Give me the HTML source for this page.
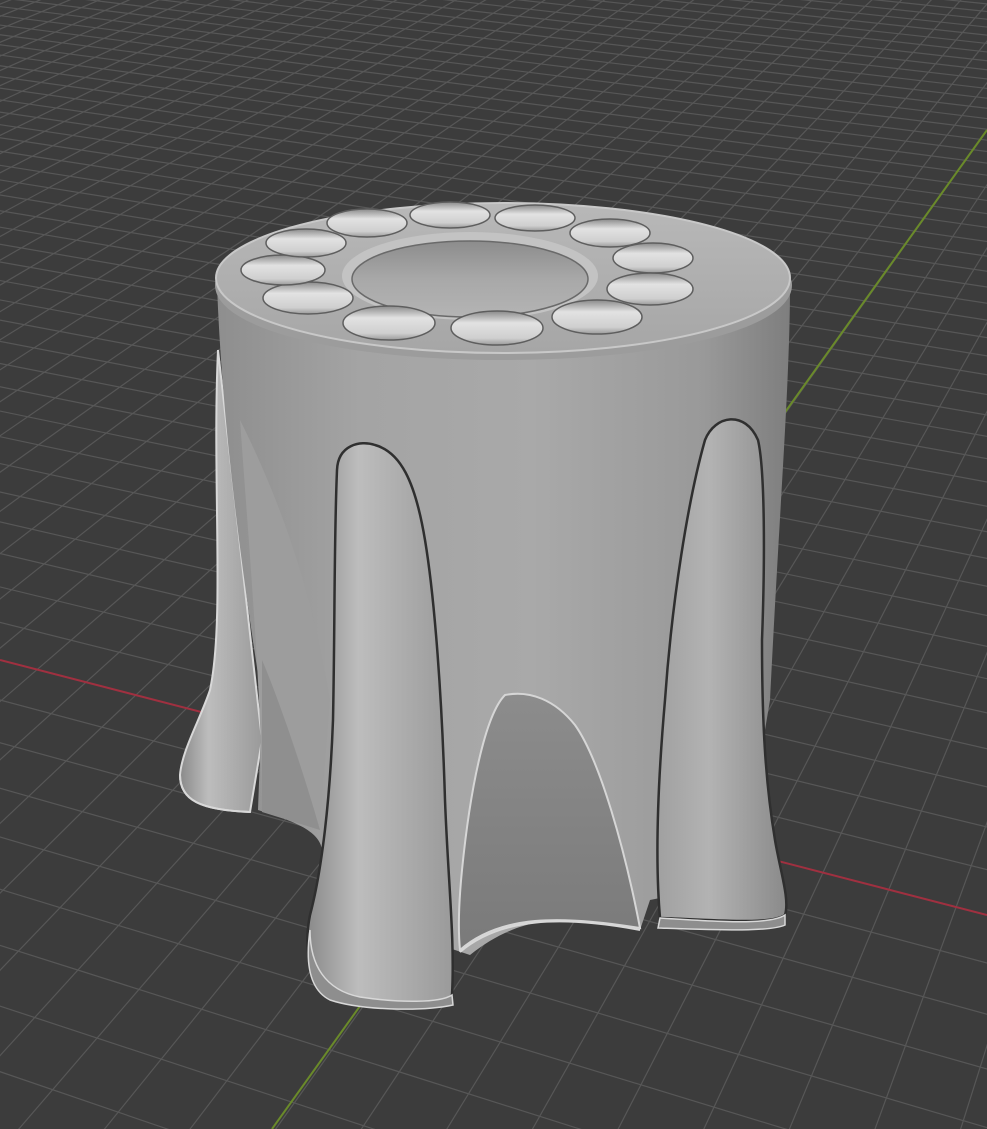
<!DOCTYPE html>
<html><head><meta charset="utf-8"><style>
html,body{margin:0;padding:0;background:#3c3c3c;width:987px;height:1129px;overflow:hidden}
svg{display:block}
</style></head><body>
<svg id="s" width="987" height="1129" viewBox="0 0 987 1129" xmlns="http://www.w3.org/2000/svg">
<defs>
<linearGradient id="body" x1="0" x2="1" y1="0" y2="0">
<stop offset="0" stop-color="#8e8e8e"/><stop offset="0.25" stop-color="#a4a4a4"/><stop offset="0.55" stop-color="#a9a9a9"/><stop offset="0.85" stop-color="#999"/><stop offset="1" stop-color="#7e7e7e"/>
</linearGradient>
<linearGradient id="leg" x1="0" x2="1" y1="0" y2="0">
<stop offset="0" stop-color="#8a8a8a"/><stop offset="0.35" stop-color="#bdbdbd"/><stop offset="1" stop-color="#9a9a9a"/>
</linearGradient>
<linearGradient id="legR" x1="0" x2="1" y1="0" y2="0">
<stop offset="0" stop-color="#a0a0a0"/><stop offset="0.4" stop-color="#b3b3b3"/><stop offset="1" stop-color="#8a8a8a"/>
</linearGradient>
<linearGradient id="arch" x1="0" x2="0" y1="0" y2="1">
<stop offset="0" stop-color="#8c8c8c"/><stop offset="1" stop-color="#7a7a7a"/>
</linearGradient>
<linearGradient id="hole" x1="0" x2="0" y1="0" y2="1">
<stop offset="0" stop-color="#8a8a8a"/><stop offset="0.35" stop-color="#e2e2e2"/><stop offset="0.8" stop-color="#cfcfcf"/><stop offset="1" stop-color="#9a9a9a"/>
</linearGradient>
<linearGradient id="top" x1="0" x2="0" y1="0" y2="1">
<stop offset="0" stop-color="#b8b8b8"/><stop offset="1" stop-color="#a6a6a6"/>
</linearGradient>
<linearGradient id="ch" x1="0" x2="0" y1="0" y2="1">
<stop offset="0" stop-color="#8c8c8c"/><stop offset="0.5" stop-color="#a8a8a8"/><stop offset="1" stop-color="#b4b4b4"/>
</linearGradient>
</defs>
<rect width="987" height="1129" fill="#3c3c3c"/>
<g id="grid" stroke="#575757" stroke-width="1.2" fill="none"></g>
<line x1="0" y1="660" x2="987" y2="915" stroke="#a03040" stroke-width="2"/>
<line x1="987" y1="130" x2="272" y2="1129" stroke="#6a8a2a" stroke-width="2"/>

<!-- back legs -->
<path d="M218 350 C212 480 225 620 210 690 C200 720 182 750 180 775 C180 800 200 810 250 812 L262 740 Z" fill="url(#leg)" stroke="#d8d8d8" stroke-width="2"/>
<path d="M740 640 C748 670 762 690 762 705 C760 720 748 725 740 728 Z" fill="#a2a2a2" stroke="#d8d8d8" stroke-width="2"/>

<!-- body -->
<path d="M217 285 C222 420 240 560 262 700 L258 810 C290 820 320 830 322 850 L330 930 L440 945 L470 955 C520 915 560 920 590 920 L640 930 L650 900 L700 890 L740 880 L770 700 C780 500 790 380 790 285 Z" fill="url(#body)"/>
<path d="M240 420 C250 560 262 700 262 810 L320 825 L330 700 C315 610 290 520 240 420 Z" fill="#9d9d9d"/>
<path d="M262 660 C275 690 300 760 320 830 L262 812 Z" fill="#8f8f8f"/>
<!-- center arch -->
<path d="M505 695 C485 715 470 790 462 870 C459 900 458 930 460 950 C500 915 560 915 640 928 C625 850 600 760 575 725 C555 700 530 690 505 695 Z" fill="url(#arch)" stroke="#d6d6d6" stroke-width="2"/>
<!-- front-left leg -->
<path d="M337 470 C338 445 360 440 375 445 C400 452 415 480 425 540 C435 600 442 700 445 800 C448 880 455 940 452 995 C440 1010 380 1005 335 995 C310 985 303 950 310 915 C322 870 330 800 333 720 C335 620 334 540 337 470 Z" fill="url(#leg)" stroke="#2f2f2f" stroke-width="2.5"/>
<path d="M310 930 C310 965 325 990 360 997 C400 1003 440 1003 452 995 L453 1005 C420 1012 360 1010 330 1000 C310 990 305 965 310 930 Z" fill="#8e8e8e" stroke="#d8d8d8" stroke-width="1.5"/>
<!-- front-right leg -->
<path d="M705 440 C715 415 745 410 758 440 C765 470 765 560 762 640 C762 720 765 780 775 840 C780 870 790 900 785 915 C770 925 720 920 660 918 C655 860 658 780 665 700 C672 600 688 500 705 440 Z" fill="url(#legR)" stroke="#2f2f2f" stroke-width="2.5"/>
<path d="M660 918 C720 922 770 925 785 915 L785 925 C770 932 720 930 658 928 Z" fill="#8e8e8e" stroke="#d8d8d8" stroke-width="1.5"/>
<path d="M180 775 C180 800 200 810 250 812" fill="none" stroke="#d8d8d8" stroke-width="2"/>
<path d="M460 952 C500 918 560 915 640 930" fill="none" stroke="#d8d8d8" stroke-width="2"/>

<!-- top rim -->
<path d="M215 285 C215 250 340 203 503 203 C666 203 792 250 792 285 C792 330 660 360 503 360 C346 360 215 330 215 285 Z" fill="#9c9c9c"/>
<ellipse cx="503" cy="278" rx="287" ry="75" fill="url(#top)" stroke="#c8c8c8" stroke-width="2"/>
<ellipse cx="470" cy="276" rx="128" ry="44" fill="#c3c3c3"/>
<ellipse cx="470" cy="279" rx="118" ry="38" fill="url(#ch)" stroke="#6a6a6a" stroke-width="1.5"/>
<g fill="url(#hole)" stroke="#5e5e5e" stroke-width="1.5">
<ellipse cx="367" cy="223" rx="40" ry="14"/>
<ellipse cx="450" cy="215" rx="40" ry="13"/>
<ellipse cx="535" cy="218" rx="40" ry="13"/>
<ellipse cx="610" cy="233" rx="40" ry="14"/>
<ellipse cx="653" cy="258" rx="40" ry="15"/>
<ellipse cx="650" cy="289" rx="43" ry="16"/>
<ellipse cx="597" cy="317" rx="45" ry="17"/>
<ellipse cx="497" cy="328" rx="46" ry="17"/>
<ellipse cx="389" cy="323" rx="46" ry="17"/>
<ellipse cx="308" cy="298" rx="45" ry="16"/>
<ellipse cx="283" cy="270" rx="42" ry="15"/>
<ellipse cx="306" cy="243" rx="40" ry="14"/>
</g>
</svg>
<script>
(function(){
var g=document.getElementById('grid');
var A=[-4880,-600],B=[1507,-600],O=[515,793],s1=0.0108,s2=0.026;
function P(u,v){var w=s1*u+s2*v+1;return [(s1*u*A[0]+s2*v*B[0]+O[0])/w,(s1*u*A[1]+s2*v*B[1]+O[1])/w,w];}
function clip(x1,y1,x2,y2){return '<line x1="'+x1.toFixed(1)+'" y1="'+y1.toFixed(1)+'" x2="'+x2.toFixed(1)+'" y2="'+y2.toFixed(1)+'"/>';}
var out='';
for(var u=-80;u<=120;u++){
 var vmin=Math.max(-40,(0.05-1-s1*u)/s2);
 var a=P(u,vmin),b=P(u,400);
 if(a[2]>0&&b[2]>0) out+=clip(a[0],a[1],b[0],b[1]);
}
for(var v=-40;v<=400;v++){
 var umin=Math.max(-80,(0.05-1-s2*v)/s1);
 var a=P(umin,v),b=P(1000,v);
 if(a[2]>0&&b[2]>0) out+=clip(a[0],a[1],b[0],b[1]);
}
g.innerHTML=out;
})();
</script>
</body></html>
